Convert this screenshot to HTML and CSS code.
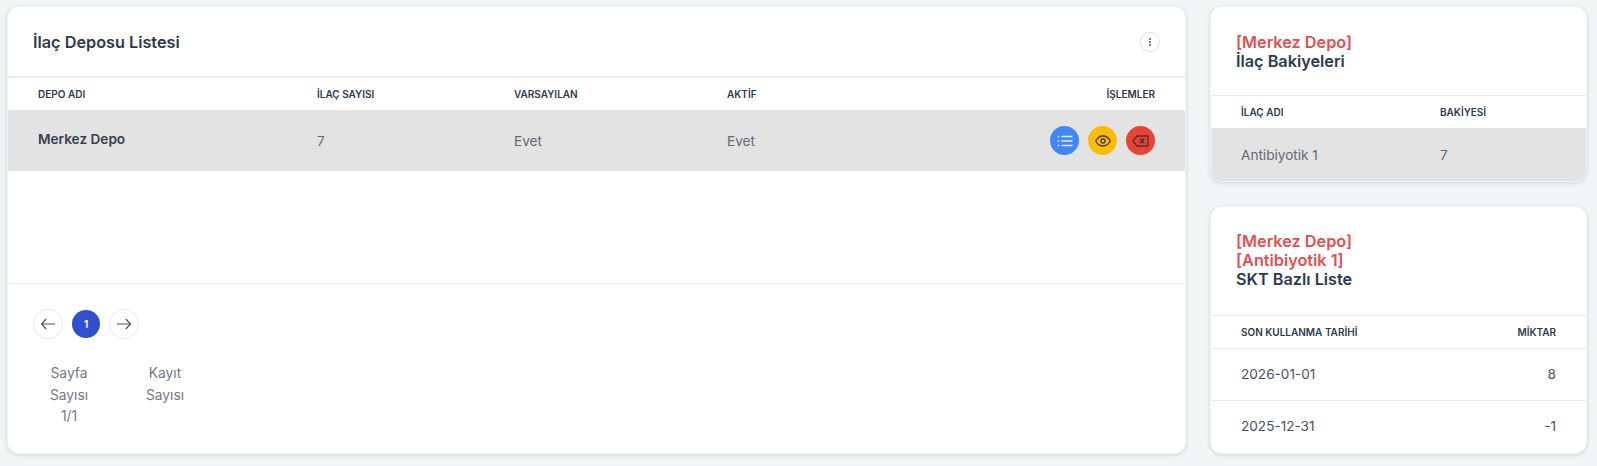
FILE: index.html
```html
<!DOCTYPE html>
<html lang="tr">
<head>
<meta charset="utf-8">
<title>İlaç Deposu Listesi</title>
<link rel="stylesheet" href="styles.css">
</head>
<body>
<main class="layout">
  <section class="card main-card">
    <header class="card-head main-head">
      <h2 class="title">İlaç Deposu Listesi</h2>
      <button class="menu-btn" aria-label="Menü">
        <svg width="12" height="12" viewBox="0 0 12 12"><circle cx="6" cy="3" r="0.9" fill="#3a4658"/><circle cx="6" cy="6" r="0.9" fill="#3a4658"/><circle cx="6" cy="9" r="0.9" fill="#3a4658"/></svg>
      </button>
    </header>
    <div class="table-area">
      <table class="tbl main-tbl">
        <colgroup><col class="c1"><col class="c2"><col class="c3"><col class="c4"><col></colgroup>
        <thead><tr><th>DEPO ADI</th><th>İLAÇ SAYISI</th><th>VARSAYILAN</th><th>AKTİF</th><th class="right">İŞLEMLER</th></tr></thead>
        <tbody>
          <tr class="selected">
            <td class="name">Merkez Depo</td><td>7</td><td>Evet</td><td>Evet</td>
            <td class="right">
              <div class="actions">
                <button class="act blue" aria-label="Liste">
                  <svg width="16" height="14" viewBox="0 0 16 14" fill="none" stroke="#e3edfd" stroke-width="1.300"><path d="M4.500 2.500H15.500M4.500 7H15.500M4.500 11.500H15.500"/><path d="M0.700 2.500H2.300M0.700 7H2.300M0.700 11.500H2.300"/></svg>
                </button>
                <button class="act yellow" aria-label="Görüntüle">
                  <svg width="16" height="12" viewBox="0 0 16 12" fill="none" stroke="#40392a" stroke-width="1.300"><path d="M0.800 6C2.500 2.700 4.900 1 8 1S13.500 2.700 15.200 6C13.500 9.300 11.100 11 8 11S2.500 9.300 0.800 6Z"/><circle cx="8" cy="6" r="2"/></svg>
                </button>
                <button class="act red" aria-label="Sil">
                  <svg width="17" height="12" viewBox="0 0 17 12" fill="none" stroke="#4a3331" stroke-width="1.300"><path d="M5 1H16V11H5L0.800 6Z" stroke-linejoin="round"/><path d="M8.300 3.800L12.200 8.200M12.200 3.800L8.300 8.200" stroke-width="1.700"/></svg>
                </button>
              </div>
            </td>
          </tr>
        </tbody>
      </table>
    </div>
    <footer class="pager-area">
      <nav class="pager">
        <button class="page-btn" aria-label="Önceki">
          <svg width="16" height="12" viewBox="0 0 16 12" fill="none" stroke="#4a5566" stroke-width="1.200"><path d="M15 6H1.500M6.200 1L1.500 6L6.200 11"/></svg>
        </button>
        <span class="page-cur">1</span>
        <button class="page-btn" aria-label="Sonraki">
          <svg width="16" height="12" viewBox="0 0 16 12" fill="none" stroke="#4a5566" stroke-width="1.200"><path d="M1 6H14.500M9.800 1L14.500 6L9.800 11"/></svg>
        </button>
      </nav>
      <div class="stats">
        <div class="stat stat-a">Sayfa Sayısı 1/1</div>
        <div class="stat stat-b">Kayıt Sayısı</div>
      </div>
    </footer>
  </section>
  <aside class="side">
    <section class="card bal-card">
      <header class="card-head side-head">
        <h3 class="title side-title"><span class="accent">[Merkez Depo]</span><br>İlaç Bakiyeleri</h3>
      </header>
      <table class="tbl side-tbl">
        <colgroup><col class="s1"><col></colgroup>
        <thead><tr><th>İLAÇ ADI</th><th>BAKİYESİ</th></tr></thead>
        <tbody><tr class="selected"><td>Antibiyotik 1</td><td>7</td></tr></tbody>
      </table>
    </section>
    <section class="card skt-card">
      <header class="card-head side-head">
        <h3 class="title side-title"><span class="accent">[Merkez Depo]<br>[Antibiyotik 1]</span><br>SKT Bazlı Liste</h3>
      </header>
      <table class="tbl side-tbl skt-tbl">
        <thead><tr><th>SON KULLANMA TARİHİ</th><th class="right">MİKTAR</th></tr></thead>
        <tbody>
          <tr><td>2026-01-01</td><td class="right">8</td></tr>
          <tr><td>2025-12-31</td><td class="right">-1</td></tr>
        </tbody>
      </table>
    </section>
  </aside>
</main>
</body>
</html>
```

FILE: styles.css
```css
* { box-sizing: border-box; }
html, body { margin: 0; height: 100%; }
body {
  background: #f3f4f6;
  font-family: Inter, "Liberation Sans", sans-serif;
  color: #2b3a4e;
  overflow: hidden;
}
.layout {
  display: grid;
  grid-template-columns: 1179px 377px;
  column-gap: 24px;
  padding: 6px 0 0 7px;
  height: 454px;
}
.card {
  background: #fff;
  border-radius: 12px;
  box-shadow: 0 1px 4px rgba(0, 0, 0, 0.14);
  border: 1px solid #f4f5f6;
  overflow: hidden;
}
.main-card { display: flex; flex-direction: column; height: 448px; }
.card-head { display: flex; align-items: center; justify-content: space-between; }
.main-head {
  height: 71px;
  padding: 0 25px 0 25px;
  border-bottom: 2px solid #e9ebee;
  flex: none;
}
.title { margin: 0; font-size: 16.250px; font-weight: 600; color: #2b3a4e; }
.menu-btn {
  width: 20px; height: 20px; padding: 0;
  border: 1px solid #dfe2e6; border-radius: 50%;
  background: #fff;
  display: flex; align-items: center; justify-content: center;
}
.table-area { height: 206px; flex: none; border-bottom: 1px solid #e5e7ea; }
.tbl { width: 100%; border-collapse: collapse; table-layout: fixed; }
.tbl th {
  height: 32px; padding: 0;
  font-size: 10px; font-weight: 600; text-align: left; color: #2b3a4e;
  white-space: nowrap;
}
.tbl td { padding: 0; font-size: 13.600px; color: #5f6876; }
.tbl .right { text-align: right; }
.selected { background: #e3e3e3; }
.main-tbl th:first-child, .main-tbl td:first-child { padding-left: 30px; }
.main-tbl th:last-child, .main-tbl td:last-child { padding-right: 30px; }
.main-tbl .selected td { height: 61px; }
.c1 { width: 309px; }
.c2 { width: 197px; }
.c3 { width: 213px; }
.c4 { width: 200px; }
.main-tbl td.name { font-weight: 600; color: #36404f; padding-bottom: 4px; }
.actions { display: flex; justify-content: flex-end; gap: 9px; }
.act {
  width: 29px; height: 29px; padding: 0; border: 0; border-radius: 50%;
  display: flex; align-items: center; justify-content: center;
}
.blue { background: #4285f4; }
.yellow { background: #fbbc09; }
.red { background: #ea4335; }
.pager-area { padding: 25px 0 0 25px; }
.pager { display: flex; align-items: center; gap: 9px; }
.page-btn {
  width: 30px; height: 30px; padding: 0;
  background: #fff; border: 1px solid #e6e8eb; border-radius: 50%;
  display: flex; align-items: center; justify-content: center;
}
.page-cur {
  width: 28px; height: 28px; border-radius: 50%;
  background: #2f4fcf; color: #fff;
  font-size: 11px; font-weight: 600;
  display: flex; align-items: center; justify-content: center;
}
.stats { display: flex; margin-top: 24px; }
.stat {
  font-size: 13.800px; line-height: 21.500px; color: #737b8a;
  text-align: center; font-weight: 400;
}
.stat-a { width: 72px; padding: 0 10px; }
.stat-b { width: 60px; margin-left: 30px; padding: 0 6px; }
.side { display: flex; flex-direction: column; gap: 24px; }
.bal-card { height: 176px; }
.skt-card { height: 248px; }
.side-head { padding: 26px 25px 0 25px; border-bottom: 1px solid #e8eaed; align-items: flex-start; }
.bal-card .side-head { height: 89px; }
.skt-card .side-head { height: 109px; padding-top: 25px; }
.side-title { line-height: 19px; }
.accent { color: #e25050; }
.side-tbl th:first-child, .side-tbl td:first-child { padding-left: 30px; }
.s1 { width: 229px; }
.side-tbl .selected td { height: 53px; }
.skt-tbl th { height: 32px; }
.skt-tbl th:last-child, .skt-tbl td:last-child { padding-right: 30px; }
.skt-tbl thead tr { border-bottom: 1px solid #e8eaed; }
.skt-tbl tbody tr + tr { border-top: 1px solid #e8eaed; }
.skt-tbl td { height: 52px; color: #4a5362; }
```
